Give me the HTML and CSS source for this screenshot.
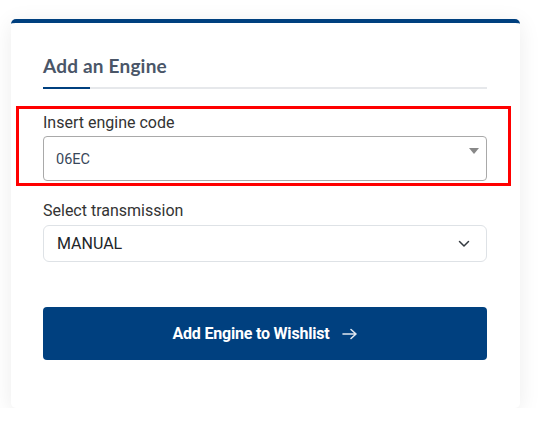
FILE: index.html
```html
<!DOCTYPE html>
<html lang="en">
<head>
<meta charset="utf-8">
<title>Add an Engine</title>
<link rel="stylesheet" href="styles.css">
</head>
<body>
<div class="card">
  <div class="card-header">
    <h2 class="title">Add an Engine</h2>
  </div>
  <div class="field highlighted">
    <label class="label">Insert engine code</label>
    <div class="combo">
      <span class="combo-value">06EC</span>
      <svg class="combo-caret" width="10" height="6" viewBox="0 0 10 6"><path d="M0 0 L10 0 L5 6 Z" fill="#888"/></svg>
    </div>
  </div>
  <div class="field second">
    <label class="label">Select transmission</label>
    <div class="select">
      <span class="select-value">MANUAL</span>
      <svg class="select-chevron" width="12" height="8" viewBox="0 0 12 8"><path d="M1.5 1.5 L6 6 L10.5 1.5" fill="none" stroke="#343a40" stroke-width="1.5" stroke-linecap="round" stroke-linejoin="round"/></svg>
    </div>
  </div>
  <button class="btn">Add Engine to Wishlist
    <svg class="btn-arrow" width="16" height="12" viewBox="0 0 16 12"><path d="M1 6 H14 M9 1.5 L14 6 L9 10.5" fill="none" stroke="#dfe6ef" stroke-width="1.6" stroke-linecap="round" stroke-linejoin="round"/></svg>
  </button>
</div>
</body>
</html>
```
FILE: styles.css
```css
html, body {
  margin: 0;
  padding: 0;
  background: #ffffff;
}
body {
  padding: 19px 0 0 11px;
  font-family: Roboto, "Liberation Sans", sans-serif;
}
.card {
  width: 509px;
  box-sizing: border-box;
  background: #fff;
  border-top: 4px solid #00407f;
  border-radius: 5px;
  box-shadow: 0 4px 22px rgba(0, 0, 0, 0.08);
  padding: 32px 33px 48px 32px;
}
.card-header {
  border-bottom: 2px solid #e6e8eb;
  position: relative;
  padding-bottom: 10px;
}
.card-header::after {
  content: "";
  position: absolute;
  left: 0;
  bottom: -2px;
  width: 47px;
  height: 2px;
  background: #00407f;
}
.title {
  margin: 0;
  font-family: Lato, "Open Sans", sans-serif;
  font-weight: 700;
  font-size: 19px;
  line-height: 22px;
  color: #4a5668;
  letter-spacing: 0.2px;
}
.field {
  display: flex;
  flex-direction: column;
  position: relative;
  margin-top: 24px;
}
.field.second {
  margin-top: 20px;
}
.highlighted::after {
  content: "";
  position: absolute;
  left: -27px;
  right: -24px;
  top: -7px;
  bottom: -5px;
  border: 3px solid #ff0000;
  pointer-events: none;
}
.label {
  font-size: 16px;
  line-height: 19px;
  color: #333;
  margin-bottom: 4px;
}
.second .label {
  margin-bottom: 5px;
}
.combo {
  height: 45px;
  box-sizing: border-box;
  border: 1px solid #a9a9a9;
  border-radius: 4px;
  display: flex;
  align-items: center;
  justify-content: space-between;
  padding: 0 7px 0 12px;
}
.combo-value {
  font-size: 14.5px;
  color: #38475a;
  margin-top: 1px;
}
.combo-caret {
  align-self: flex-start;
  margin-top: 11px;
}
.select {
  height: 37px;
  box-sizing: border-box;
  border: 1px solid #dee2e6;
  border-radius: 6px;
  display: flex;
  align-items: center;
  justify-content: space-between;
  padding: 0 16px 0 13px;
}
.select-value {
  font-size: 16px;
  color: #212529;
}
.btn {
  margin-top: 45px;
  width: 100%;
  height: 53px;
  border: 0;
  border-radius: 4px;
  background: #00407f;
  color: #fff;
  font-family: Roboto, "Liberation Sans", sans-serif;
  font-weight: 700;
  font-size: 16px;
  display: flex;
  align-items: center;
  justify-content: center;
  gap: 12px;
  padding: 0;
  letter-spacing: -0.2px;
}
.btn-arrow {
  display: block;
}
```
